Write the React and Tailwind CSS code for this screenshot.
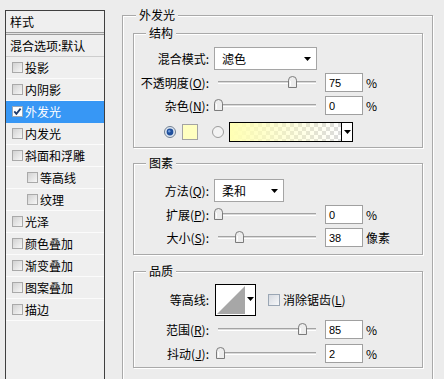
import React from 'react';

const items = [
  { t: '投影' },
  { t: '内阴影' },
  { t: '外发光', sel: true },
  { t: '内发光' },
  { t: '斜面和浮雕' },
  { t: '等高线', indent: true },
  { t: '纹理', indent: true },
  { t: '光泽' },
  { t: '颜色叠加' },
  { t: '渐变叠加' },
  { t: '图案叠加' },
  { t: '描边' },
];

function Chk({ checked }) {
  if (checked) {
    return (
      <svg width="11" height="11" viewBox="0 0 11 11" className="shrink-0">
        <rect x="0.5" y="0.5" width="10" height="10" fill="#ffffff" stroke="#9aa8b8" />
        <path d="M2.3 5.4 L4.4 7.8 L8.6 2.6" fill="none" stroke="#1d3a6b" strokeWidth="1.8" />
      </svg>
    );
  }
  return <div className="w-[11px] h-[11px] shrink-0 border border-[#a9a9a9] bg-linear-to-br from-[#d2d2d2] to-[#f7f7f7]" />;
}

function Arrow() {
  return (
    <svg width="7" height="4" viewBox="0 0 7 4" className="shrink-0">
      <path d="M0 0 H7 L3.5 4 Z" fill="#000000" />
    </svg>
  );
}

function Label({ children }) {
  return <div className="w-[75px] shrink-0 text-right whitespace-nowrap">{children}</div>;
}

function U({ children }) {
  return <span className="underline underline-offset-1">{children}</span>;
}

function Select({ wClass, text }) {
  return (
    <div className={`ml-[5px] h-[23px] ${wClass} border border-[#a5a5a5] bg-white flex items-center justify-between pl-[7px] pr-[5px]`}>
      <span>{text}</span>
      <Arrow />
    </div>
  );
}

function Thumb({ center }) {
  return (
    <svg
      width="9"
      height="12"
      viewBox="0 0 9 12"
      className="absolute top-[3px]"
      style={{ left: center - 214 - 4.5 }}
    >
      <path d="M0.5 11.5 V4.2 Q0.5 0.5 4.5 0.5 Q8.5 0.5 8.5 4.2 V11.5 Z" fill="#ededed" stroke="#7b7b7b" />
      <path d="M2.5 10 V5" stroke="#ffffff" />
    </svg>
  );
}

function SliderRow({ label, value, unit, thumb, mt }) {
  return (
    <div className={`flex items-center h-[19px] ${mt}`}>
      <Label>{label}</Label>
      <div className="relative ml-[5px] w-[106px] h-[19px] shrink-0">
        <div className="absolute left-[4px] w-[98px] top-[8px] h-[3px] border-y border-t-[#a3a3a3] border-b-[#ffffff] bg-[#dadada]" />
        <Thumb center={thumb} />
      </div>
      <div className="ml-[5px] w-[38px] h-[19px] shrink-0 border border-[#a0a0a0] bg-white pl-[3px] flex items-center font-['Liberation_Sans',sans-serif] text-[11px]">
        {value}
      </div>
      <span className="ml-[3px] whitespace-nowrap">{unit}</span>
    </div>
  );
}

function Group({ title, cls, children }) {
  return (
    <div className={`relative w-[290px] border border-[#a9a9a9] shadow-[1px_1px_0_#ffffff,inset_1px_1px_0_#ffffff] ${cls}`}>
      <div className="absolute -top-[9px] left-[12px] px-[3px] bg-[#ececec] leading-[16px]">{title}</div>
      {children}
    </div>
  );
}

function RadioOn() {
  return (
    <svg width="12" height="12" viewBox="0 0 12 12" className="shrink-0">
      <circle cx="6" cy="6" r="5.5" fill="#dfe7f0" stroke="#6f7f92" />
      <circle cx="6" cy="6" r="3.4" fill="#1f4f9c" />
      <circle cx="5.2" cy="5.2" r="1.2" fill="#6f9ad8" />
    </svg>
  );
}

function RadioOff() {
  return (
    <svg width="12" height="12" viewBox="0 0 12 12" className="shrink-0">
      <circle cx="6" cy="6" r="5.5" fill="#f3f3f3" stroke="#9b9b9b" />
    </svg>
  );
}

export default function App() {
  return (
    <div className="w-[444px] h-[379px] overflow-hidden bg-[#ececec] flex items-start font-['Noto_Sans_CJK_SC',sans-serif] text-[12px] leading-[16px] text-black">
      {/* left list */}
      <div className="ml-[5px] mt-[10px] w-[100px] h-[369px] shrink-0 border-x border-t border-[#3f3f3f] bg-[#efefef] flex flex-col">
        <div className="h-[21px] flex items-center pl-[4px]">样式</div>
        <div className="h-[3px] border-y border-[#9c9c9c] bg-[#e2e2e2]" />
        <div className="h-[22px] flex items-center pl-[4px] border-b border-[#cdcdcd] whitespace-nowrap">混合选项:默认</div>
        {items.map((it) => (
          <div
            key={it.t}
            className={`h-[22px] flex items-center border-b whitespace-nowrap ${it.sel ? 'bg-[#3797f5] text-white border-[#3797f5]' : 'border-[#fbfbfb]'}`}
          >
            <div className={it.indent ? 'ml-[21px]' : 'ml-[6px]'}>
              <Chk checked={it.sel} />
            </div>
            <span className="ml-[2px]">{it.t}</span>
          </div>
        ))}
      </div>

      {/* right outer group */}
      <div className="relative ml-[17px] mt-[15px] w-[311px] h-[370px] shrink-0 border border-[#a9a9a9] shadow-[1px_1px_0_#ffffff,inset_1px_1px_0_#ffffff] pl-[10px] flex flex-col">
        <div className="absolute -top-[9px] left-[13px] px-[3px] bg-[#ececec] leading-[16px]">外发光</div>

        <Group title="结构" cls="mt-[17px] h-[115px]">
          <div className="flex items-center h-[23px] mt-[13px]">
            <Label>混合模式:</Label>
            <Select wClass="w-[103px]" text="滤色" />
          </div>
          <SliderRow label={<>不透明度(<U>O</U>):</>} value="75" unit="%" thumb={292} mt="mt-[3px]" />
          <SliderRow label={<>杂色(<U>N</U>):</>} value="0" unit="%" thumb={218} mt="mt-[4px]" />
          <div className="flex items-center h-[20px] mt-[7px]">
            <div className="ml-[30px]">
              <RadioOn />
            </div>
            <div className="ml-[6px] w-[16px] h-[16px] border border-[#a3a3a3] bg-[#ffffc0]" />
            <div className="ml-[14px]">
              <RadioOff />
            </div>
            <div className="ml-[5px] w-[124px] h-[20px] border border-black flex">
              <div className="flex-1 bg-[image:conic-gradient(#dcdcdc_25%,#ffffff_0_50%,#dcdcdc_0_75%,#ffffff_0)] bg-[length:8px_8px]">
                <div className="w-full h-full bg-linear-to-r from-[#ffffb4] to-[#ffffb400]" />
              </div>
              <div className="w-[11px] border-l border-black bg-white flex items-center justify-center">
                <Arrow />
              </div>
            </div>
          </div>
        </Group>

        <Group title="图素" cls="mt-[15px] h-[92px]">
          <div className="flex items-center h-[23px] mt-[15px]">
            <Label>方法(<U>Q</U>):</Label>
            <Select wClass="w-[70px]" text="柔和" />
          </div>
          <SliderRow label={<>扩展(<U>P</U>):</>} value="0" unit="%" thumb={218} mt="mt-[3px]" />
          <SliderRow label={<>大小(<U>S</U>):</>} value="38" unit="像素" thumb={239} mt="mt-[4px]" />
        </Group>

        <Group title="品质" cls="mt-[16px] h-[97px]">
          <div className="flex items-center h-[32px] mt-[12px]">
            <Label>等高线:</Label>
            <svg width="41" height="32" viewBox="0 0 41 32" className="ml-[6px] shrink-0">
              <rect x="0.5" y="0.5" width="40" height="31" fill="#ffffff" stroke="#000000" />
              <path d="M2 30 L30 2 L30 30 Z" fill="#a7a7a7" />
              <path d="M32 13 H39 L35.5 17 Z" fill="#000000" />
            </svg>
            <div className="ml-[12px] w-[12px] h-[12px] shrink-0 border border-[#9aa6b4] bg-linear-to-br from-[#d6dae0] to-[#f7f8fa]" />
            <span className="ml-[3px] whitespace-nowrap">消除锯齿(<U>L</U>)</span>
          </div>
          <SliderRow label={<>范围(<U>R</U>):</>} value="85" unit="%" thumb={302} mt="mt-[4px]" />
          <SliderRow label={<>抖动(<U>J</U>):</>} value="2" unit="%" thumb={220} mt="mt-[5px]" />
        </Group>
      </div>
    </div>
  );
}
